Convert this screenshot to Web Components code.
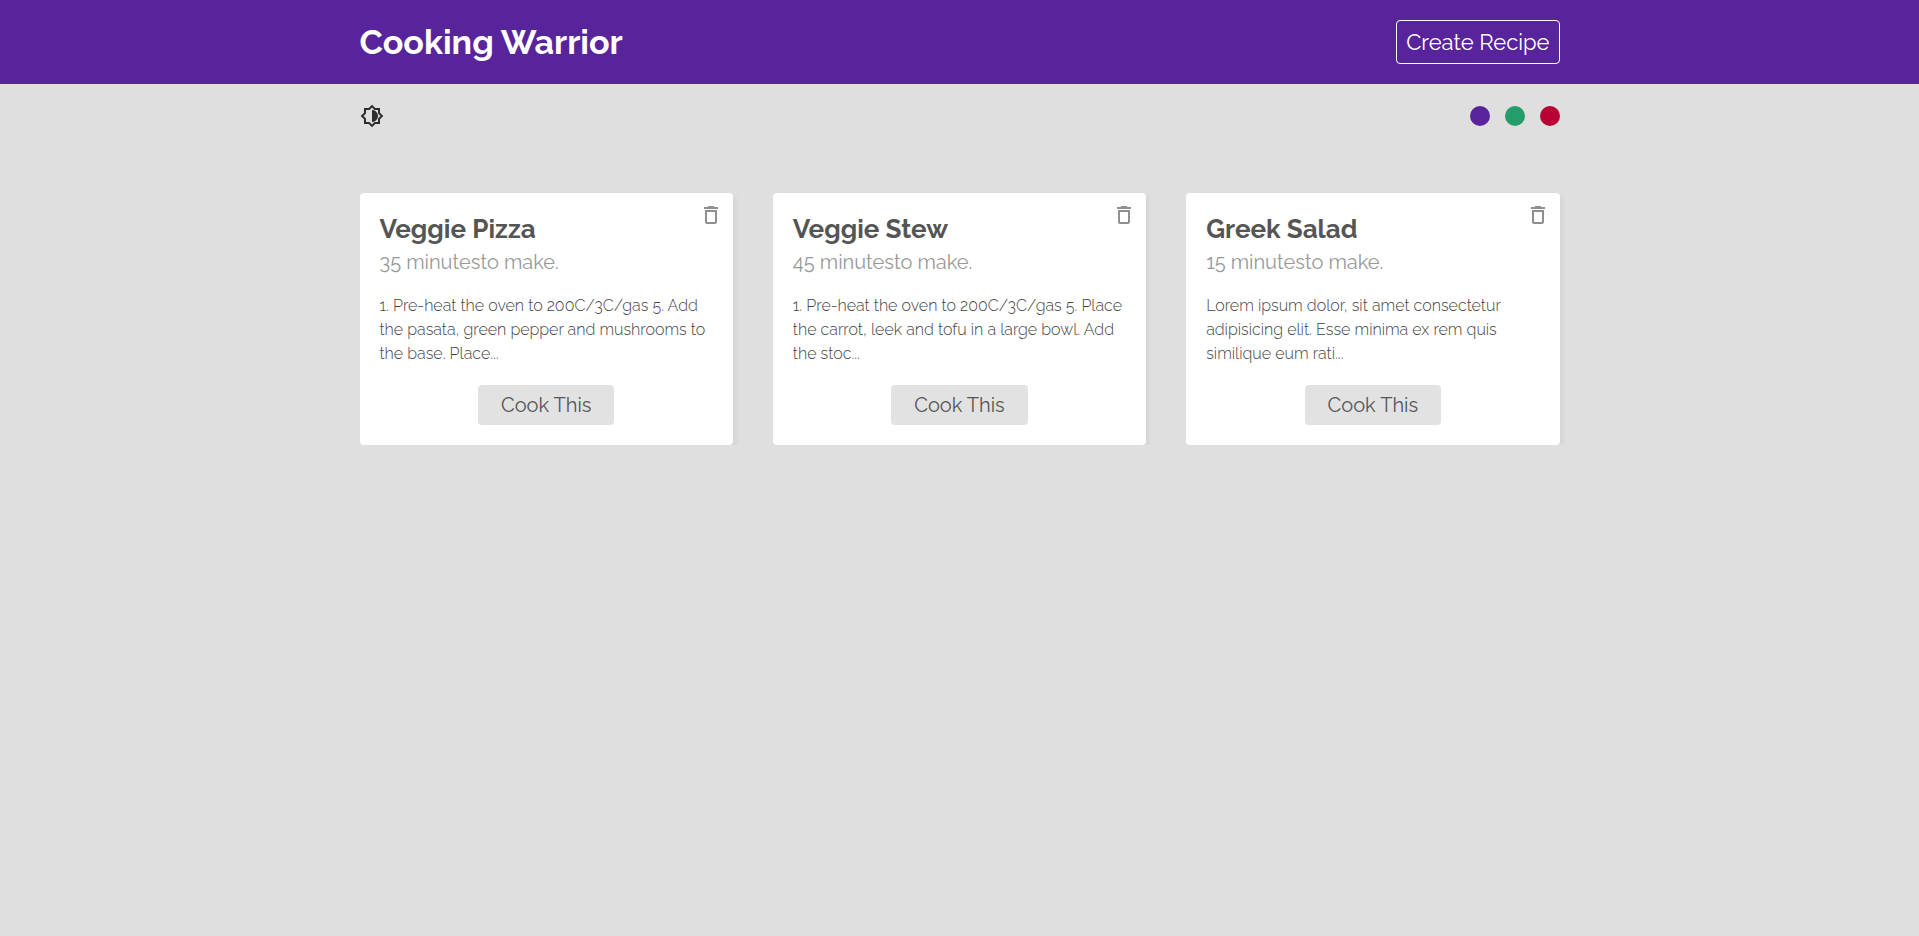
<!DOCTYPE html>
<html lang="en">
<head>
<meta charset="utf-8">
<meta name="viewport" content="width=device-width, initial-scale=1">
<title>Cooking Warrior</title>
<style>
  body {
    margin: 0;
    background: #dfdfdf;
    color: #555;
    font-family: Raleway, "Open Sans", sans-serif;
    --theme: #58249c;
  }
</style>
</head>
<body>
<cooking-app></cooking-app>

<template id="app-template">
  <style>
    :host { display: block; }
    main { max-width: 1200px; margin: 0 auto; }
    .recipes {
      display: grid;
      grid-template-columns: repeat(auto-fit, minmax(280px, 1fr));
      gap: 40px;
      margin-top: 45px;
    }
  </style>
  <site-nav><span slot="brand">Cooking Warrior</span><span slot="action">Create Recipe</span></site-nav>
  <main>
    <theme-selector></theme-selector>
    <div class="recipes">
      <recipe-card>
        <span slot="title">Veggie Pizza</span>
        <span slot="time">35 minutes</span>
        <span slot="method">1. Pre-heat the oven to 200C/3C/gas 5. Add the pasata, green pepper and mushrooms to the base. Place...</span>
      </recipe-card>
      <recipe-card>
        <span slot="title">Veggie Stew</span>
        <span slot="time">45 minutes</span>
        <span slot="method">1. Pre-heat the oven to 200C/3C/gas 5. Place the carrot, leek and tofu in a large bowl. Add the stoc...</span>
      </recipe-card>
      <recipe-card>
        <span slot="title">Greek Salad</span>
        <span slot="time">15 minutes</span>
        <span slot="method">Lorem ipsum dolor, sit amet consectetur adipisicing elit. Esse minima ex rem quis similique eum rati...</span>
      </recipe-card>
    </div>
  </main>
</template>

<template id="nav-template">
  <style>
    :host { display: block; background: var(--theme); color: #fff; }
    nav {
      display: flex;
      align-items: center;
      justify-content: space-between;
      max-width: 1200px;
      margin: 0 auto;
      padding: 20px 0;
    }
    a { color: inherit; text-decoration: none; }
    h1 { margin: 0; font-size: 34px; line-height: 40px; font-weight: 700; }
    .create {
      padding: 8px 9px;
      border: 1px solid #fff;
      border-radius: 4px;
      font-size: 22px;
      line-height: 26px;
    }
  </style>
  <nav>
    <a href="#"><h1><slot name="brand"></slot></h1></a>
    <a class="create" href="#create"><slot name="action"></slot></a>
  </nav>
</template>

<template id="theme-template">
  <style>
    :host { display: flex; align-items: center; justify-content: space-between; padding: 20px 0; }
    button { display: block; padding: 0; border: 0; background: none; cursor: pointer; }
    svg { display: block; width: 24px; height: 24px; fill: #2d2d2d; }
    .colors { display: flex; gap: 15px; }
    .colors button { width: 20px; height: 20px; border-radius: 50%; background: var(--swatch); }
  </style>
  <button type="button" aria-label="Toggle dark mode">
    <svg viewBox="0 0 24 24"><path d="M20 8.69V4h-4.69L12 .69 8.69 4H4v4.69L.69 12 4 15.31V20h4.69L12 23.31 15.31 20H20v-4.69L23.31 12 20 8.69zm-2 5.79V18h-3.52L12 20.48 9.52 18H6v-3.52L3.52 12 6 9.52V6h3.52L12 3.52 14.48 6H18v3.52L20.48 12 18 14.48zM12 6v12c3.31 0 6-2.69 6-6s-2.69-6-6-6z"/></svg>
  </button>
  <div class="colors">
    <button type="button" aria-label="Purple theme" style="--swatch: #58249c"></button>
    <button type="button" aria-label="Green theme" style="--swatch: #249c6b"></button>
    <button type="button" aria-label="Red theme" style="--swatch: #b70233"></button>
  </div>
</template>

<template id="card-template">
  <style>
    :host {
      display: flex;
      flex-direction: column;
      position: relative;
      padding: 20px;
      background: #fff;
      border-radius: 4px;
      box-shadow: 3px 3px 5px rgba(0, 0, 0, 0.05);
    }
    h2 { margin: 0 0 5px; font-size: 26px; line-height: 32px; font-weight: 700; }
    p { margin: 0; }
    .time { color: #999; font-size: 20px; line-height: 24px; }
    .method { margin: 20px 0 19px; font-size: 16px; line-height: 24px; font-weight: 300; color: #444; }
    .cook {
      align-self: center;
      padding: 8px 23px;
      border-radius: 4px;
      background: #e2e2e2;
      color: #555;
      font-size: 20px;
      line-height: 24px;
      text-decoration: none;
    }
    .delete {
      position: absolute;
      top: 10px;
      right: 10px;
      padding: 0;
      border: 0;
      background: none;
      cursor: pointer;
    }
    svg { display: block; width: 24px; height: 24px; fill: #8f8f8f; }
  </style>
  <h2><slot name="title"></slot></h2>
  <p class="time"><slot name="time"></slot>to make.</p>
  <p class="method"><slot name="method"></slot></p>
  <a class="cook" href="#recipe">Cook This</a>
  <button class="delete" type="button" aria-label="Delete recipe">
    <svg viewBox="0 0 24 24"><path d="M6 19c0 1.1.9 2 2 2h8c1.1 0 2-.9 2-2V7H6v12zM8 9h8v10H8V9zm7.5-5l-1-1h-5l-1 1H5v2h14V4z"/></svg>
  </button>
</template>

<script>
  function define(name, templateId) {
    customElements.define(name, class extends HTMLElement {
      constructor() {
        super();
        const template = document.getElementById(templateId);
        this.attachShadow({ mode: 'open' }).append(template.content.cloneNode(true));
      }
    });
  }
  define('site-nav', 'nav-template');
  define('theme-selector', 'theme-template');
  define('recipe-card', 'card-template');
  define('cooking-app', 'app-template');
</script>
</body>
</html>
